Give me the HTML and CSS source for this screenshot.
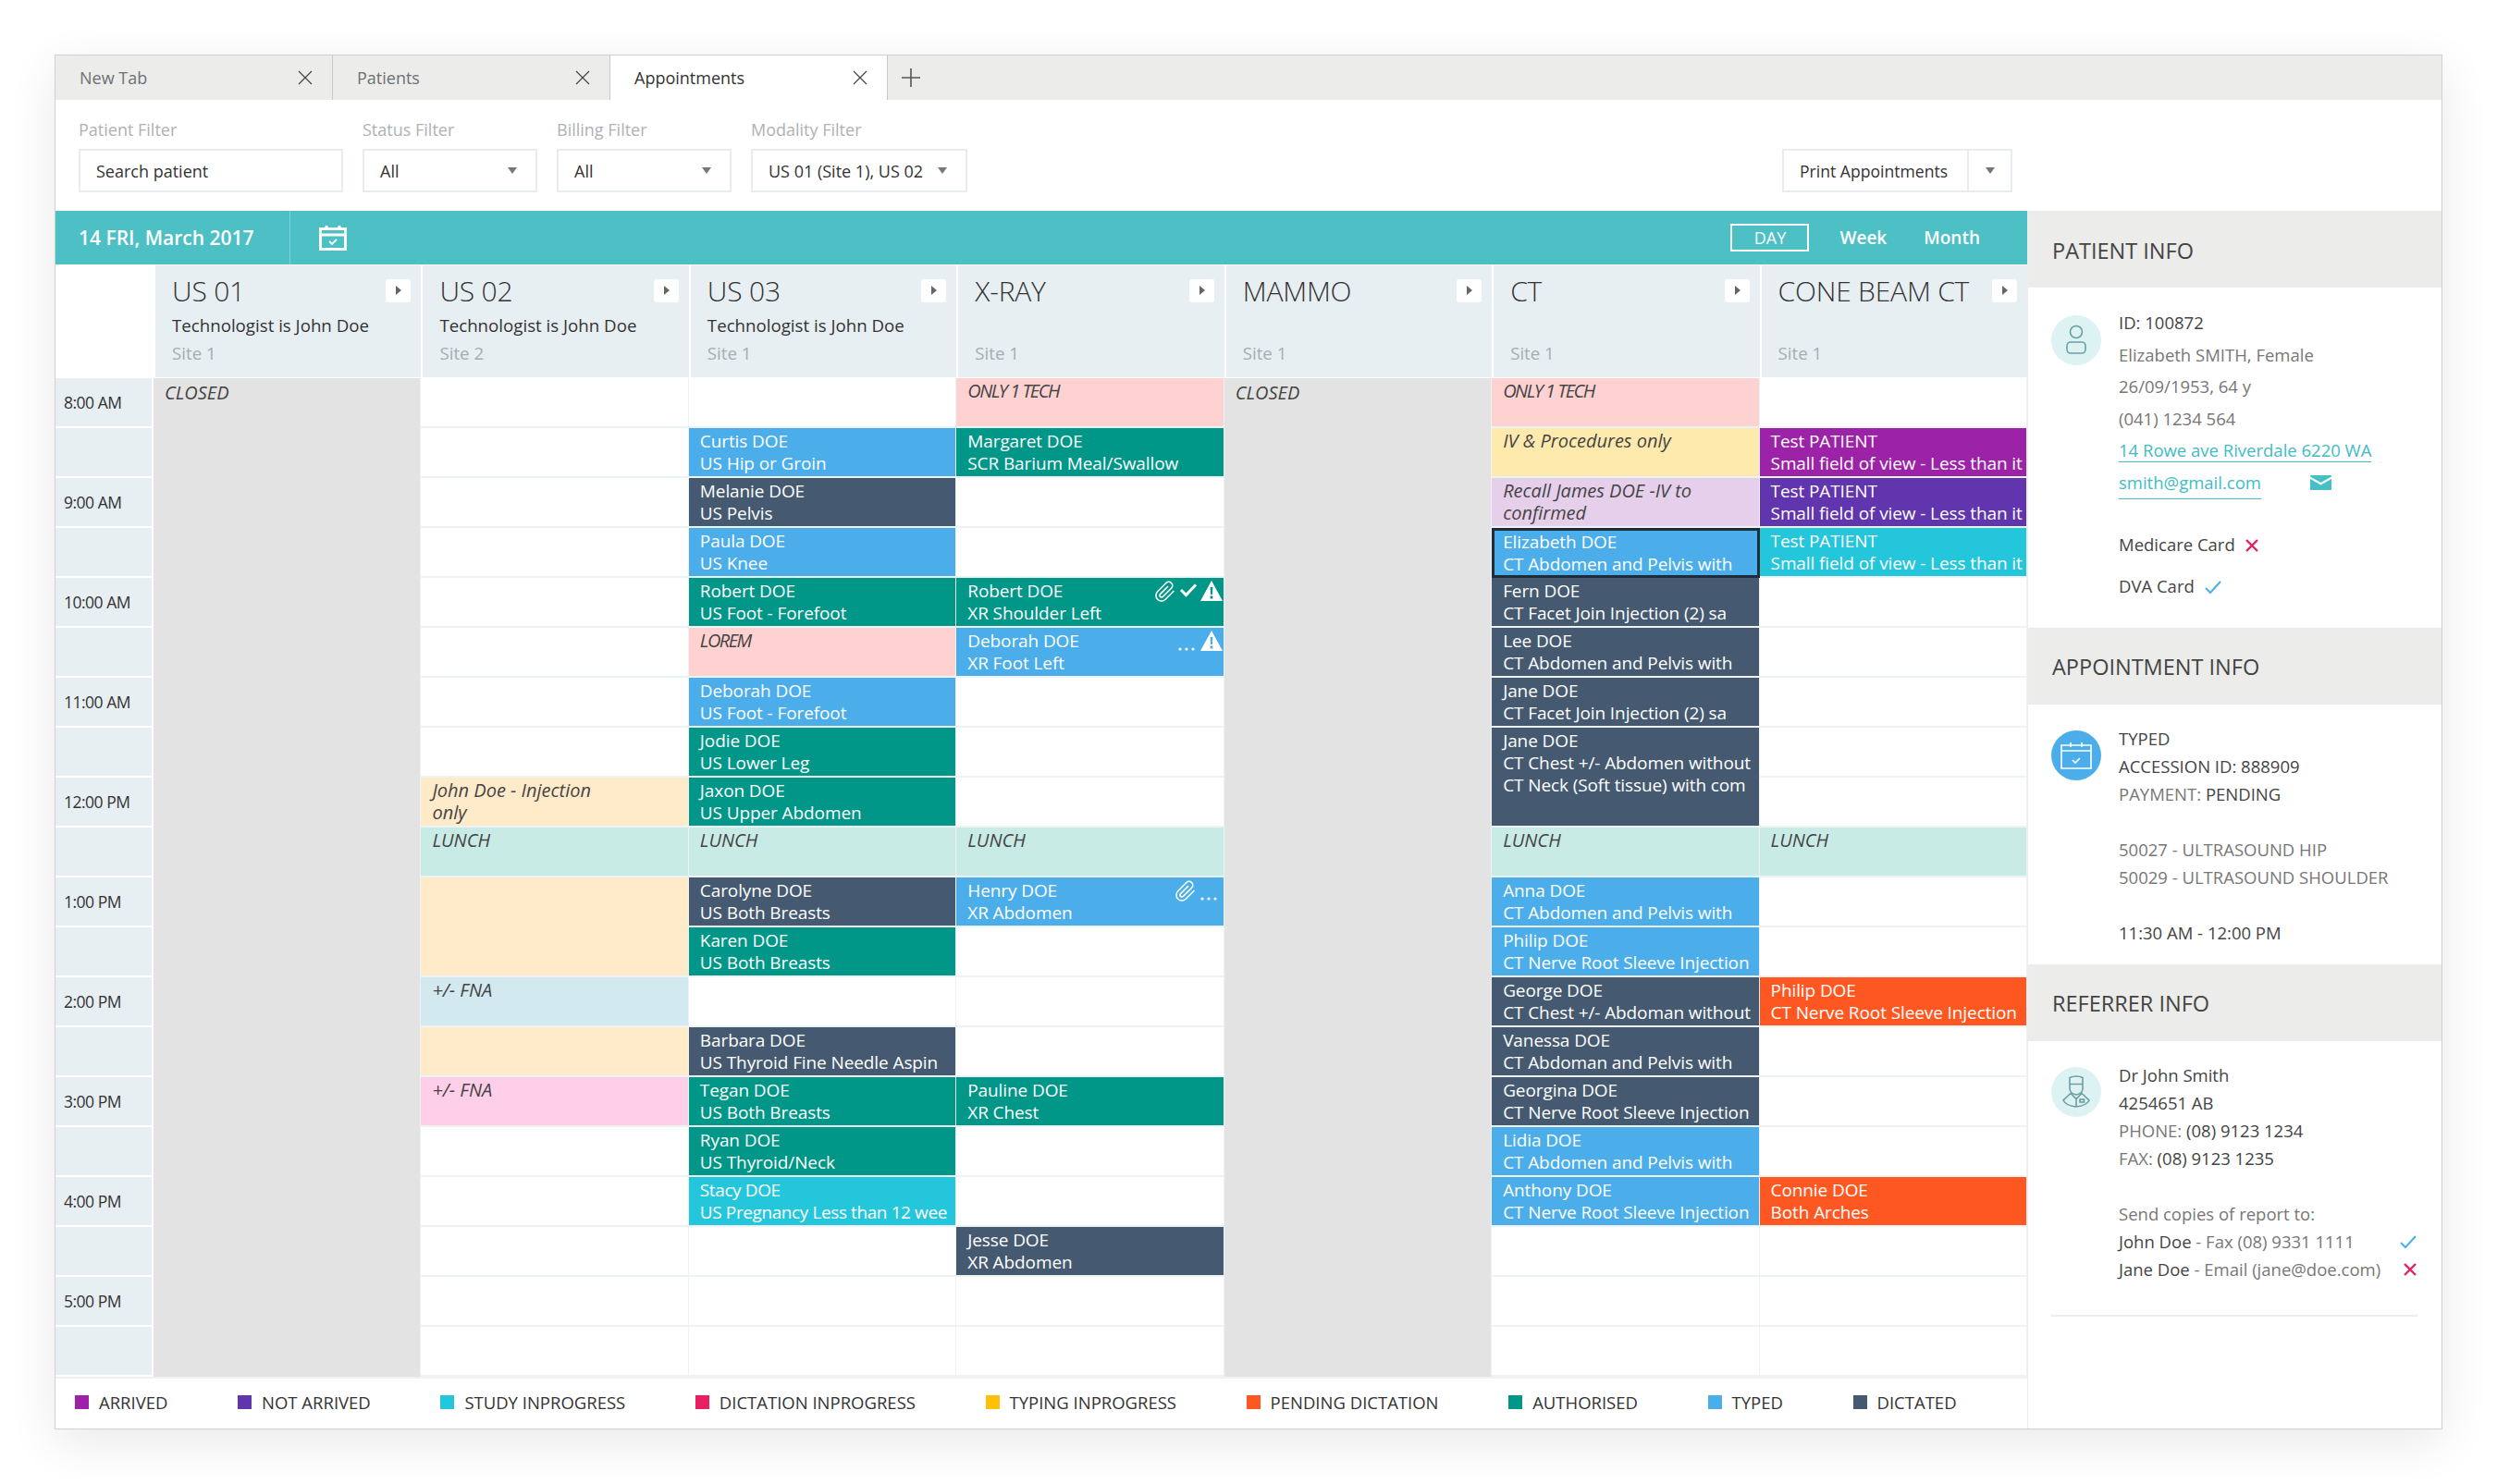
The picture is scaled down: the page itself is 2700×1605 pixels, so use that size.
FILE: index.html
```html
<!DOCTYPE html>
<html lang="en">
<head>
    <meta charset="UTF-8">
    <title>Appointments</title>
    <link rel="stylesheet" href="styles.css">
</head>
<body>
<div class="window">

    <!-- Tabs -->
    <div class="tabs">
        <div class="tab">New Tab <svg class="tab-x" viewBox="0 0 16 16"><path d="M1 1l14 14M15 1L1 15"/></svg></div>
        <div class="tab">Patients <svg class="tab-x" viewBox="0 0 16 16"><path d="M1 1l14 14M15 1L1 15"/></svg></div>
        <div class="tab active">Appointments <svg class="tab-x" viewBox="0 0 16 16"><path d="M1 1l14 14M15 1L1 15"/></svg></div>
        <svg class="tab-plus" viewBox="0 0 20 20"><path d="M10 0v20M0 10h20"/></svg>
    </div>

    <!-- Filters -->
    <div class="filters">
        <div class="filter w-patient">
            <label>Patient Filter</label>
            <div class="field">Search patient</div>
        </div>
        <div class="filter w-status">
            <label>Status Filter</label>
            <div class="field">All <span class="caret"></span></div>
        </div>
        <div class="filter w-status">
            <label>Billing Filter</label>
            <div class="field">All <span class="caret"></span></div>
        </div>
        <div class="filter w-modality">
            <label>Modality Filter</label>
            <div class="field">US 01 (Site 1), US 02 <span class="caret"></span></div>
        </div>
        <div class="print">
            <span class="print-text">Print Appointments</span>
            <span class="print-arrow"><span class="caret"></span></span>
        </div>
    </div>

    <div class="content">
        <div class="calendar">

            <div class="datebar">
                <div class="date">14 FRI, March 2017</div>
                <svg class="date-icon" viewBox="0 0 30 28">
                    <path class="cal-line" d="M1.5 4.5h27v22h-27zM1.5 11h27"/>
                    <path class="cal-line" d="M8 1v5M22 1v5"/>
                    <path class="cal-line thin" d="M11 18l3 3 5-5"/>
                </svg>
                <div class="views">
                    <span class="view current">DAY</span>
                    <span class="view">Week</span>
                    <span class="view">Month</span>
                </div>
            </div>

            <div class="heads">
                <div class="head-blank"></div>
                <div class="head"><h3>US 01</h3><p>Technologist is John Doe</p><small>Site 1</small><span class="head-btn"></span></div>
                <div class="head"><h3>US 02</h3><p>Technologist is John Doe</p><small>Site 2</small><span class="head-btn"></span></div>
                <div class="head"><h3>US 03</h3><p>Technologist is John Doe</p><small>Site 1</small><span class="head-btn"></span></div>
                <div class="head"><h3>X-RAY</h3><p>&nbsp;</p><small>Site 1</small><span class="head-btn"></span></div>
                <div class="head"><h3>MAMMO</h3><p>&nbsp;</p><small>Site 1</small><span class="head-btn"></span></div>
                <div class="head"><h3>CT</h3><p>&nbsp;</p><small>Site 1</small><span class="head-btn"></span></div>
                <div class="head"><h3>CONE BEAM CT</h3><p>&nbsp;</p><small>Site 1</small><span class="head-btn"></span></div>
            </div>

            <div class="grid">
                <!-- Times -->
                <div class="col times">
                    <div class="time">8:00 AM</div><div class="time"></div>
                    <div class="time">9:00 AM</div><div class="time"></div>
                    <div class="time">10:00 AM</div><div class="time"></div>
                    <div class="time">11:00 AM</div><div class="time"></div>
                    <div class="time">12:00 PM</div><div class="time"></div>
                    <div class="time">1:00 PM</div><div class="time"></div>
                    <div class="time">2:00 PM</div><div class="time"></div>
                    <div class="time">3:00 PM</div><div class="time"></div>
                    <div class="time">4:00 PM</div><div class="time"></div>
                    <div class="time">5:00 PM</div><div class="time"></div>
                </div>

                <!-- US 01 -->
                <div class="col">
                    <div class="cell note closed span-20">CLOSED</div>
                </div>

                <!-- US 02 -->
                <div class="col">
                    <div class="cell"></div><div class="cell"></div><div class="cell"></div><div class="cell"></div>
                    <div class="cell"></div><div class="cell"></div><div class="cell"></div><div class="cell"></div>
                    <div class="cell note tan">John Doe - Injection<br>only</div>
                    <div class="cell note mint">LUNCH</div>
                    <div class="cell note tan span-2"></div>
                    <div class="cell note sky">+/- FNA</div>
                    <div class="cell note tan"></div>
                    <div class="cell note rose">+/- FNA</div>
                    <div class="cell"></div><div class="cell"></div><div class="cell"></div><div class="cell"></div><div class="cell"></div>
                </div>

                <!-- US 03 -->
                <div class="col">
                    <div class="cell"></div>
                    <div class="cell blue">Curtis DOE<br>US Hip or Groin</div>
                    <div class="cell dark">Melanie DOE<br>US Pelvis</div>
                    <div class="cell blue">Paula DOE<br>US Knee</div>
                    <div class="cell green">Robert DOE<br>US Foot - Forefoot</div>
                    <div class="cell note pink tight">LOREM</div>
                    <div class="cell blue">Deborah DOE<br>US Foot - Forefoot</div>
                    <div class="cell green">Jodie DOE<br>US Lower Leg</div>
                    <div class="cell green">Jaxon DOE<br>US Upper Abdomen</div>
                    <div class="cell note mint">LUNCH</div>
                    <div class="cell dark">Carolyne DOE<br>US Both Breasts</div>
                    <div class="cell green">Karen DOE<br>US Both Breasts</div>
                    <div class="cell"></div>
                    <div class="cell dark">Barbara DOE<br>US Thyroid Fine Needle Aspin</div>
                    <div class="cell green">Tegan DOE<br>US Both Breasts</div>
                    <div class="cell green">Ryan DOE<br>US Thyroid/Neck</div>
                    <div class="cell cyan squeeze">Stacy DOE<br>US Pregnancy Less than 12 wee</div>
                    <div class="cell"></div><div class="cell"></div><div class="cell"></div>
                </div>

                <!-- X-RAY -->
                <div class="col">
                    <div class="cell note pink tight">ONLY 1 TECH</div>
                    <div class="cell green">Margaret DOE<br>SCR Barium Meal/Swallow</div>
                    <div class="cell"></div><div class="cell"></div>
                    <div class="cell green">Robert DOE<br>XR Shoulder Left
                        <span class="flags">
                            <svg class="flag" width="24" height="24" viewBox="0 0 24 24"><path class="flag-line" d="M21.400 11.050l-9.200 9.200a6 6 0 0 1-8.500-8.500l9.200-9.200a4 4 0 0 1 5.660 5.660l-9.200 9.200a2 2 0 0 1-2.830-2.830l8.490-8.480"/></svg>
                            <svg class="flag" width="20" height="20" viewBox="0 0 20 20"><path class="flag-line bold" d="M2 10l5.500 5.500L18 4.500"/></svg>
                            <svg class="flag" width="24" height="22" viewBox="0 0 24 22"><path class="flag-fill" fill-rule="evenodd" d="M12 0l12 22H0zM10.600 7l.5 8h1.800l.5-8zM10.600 16.500v3h2.800v-3z"/></svg>
                        </span>
                    </div>
                    <div class="cell blue">Deborah DOE<br>XR Foot Left
                        <span class="flags wide">
                            <svg class="dots" width="18" height="4" viewBox="0 0 18 4"><circle cx="2" cy="2" r="1.600"/><circle cx="9" cy="2" r="1.600"/><circle cx="16" cy="2" r="1.600"/></svg>
                            <svg class="flag" width="24" height="22" viewBox="0 0 24 22"><path class="flag-fill" fill-rule="evenodd" d="M12 0l12 22H0zM10.600 7l.5 8h1.800l.5-8zM10.600 16.500v3h2.800v-3z"/></svg>
                        </span>
                    </div>
                    <div class="cell"></div><div class="cell"></div><div class="cell"></div>
                    <div class="cell note mint">LUNCH</div>
                    <div class="cell blue">Henry DOE<br>XR Abdomen
                        <span class="flags inset">
                            <svg class="flag" width="24" height="24" viewBox="0 0 24 24"><path class="flag-line" d="M21.400 11.050l-9.200 9.200a6 6 0 0 1-8.500-8.500l9.200-9.200a4 4 0 0 1 5.660 5.660l-9.200 9.200a2 2 0 0 1-2.830-2.830l8.490-8.480"/></svg>
                            <svg class="dots" width="18" height="4" viewBox="0 0 18 4"><circle cx="2" cy="2" r="1.600"/><circle cx="9" cy="2" r="1.600"/><circle cx="16" cy="2" r="1.600"/></svg>
                        </span>
                    </div>
                    <div class="cell"></div><div class="cell"></div><div class="cell"></div>
                    <div class="cell green">Pauline DOE<br>XR Chest</div>
                    <div class="cell"></div><div class="cell"></div>
                    <div class="cell dark">Jesse DOE<br>XR Abdomen</div>
                    <div class="cell"></div><div class="cell"></div>
                </div>

                <!-- MAMMO -->
                <div class="col">
                    <div class="cell note closed span-20">CLOSED</div>
                </div>

                <!-- CT -->
                <div class="col">
                    <div class="cell note pink tight">ONLY 1 TECH</div>
                    <div class="cell note yellow">IV &amp; Procedures only</div>
                    <div class="cell note lilac">Recall James DOE -IV to<br>confirmed</div>
                    <div class="cell blue selected">Elizabeth DOE<br>CT Abdomen and Pelvis with</div>
                    <div class="cell dark">Fern DOE<br>CT Facet Join Injection (2) sa</div>
                    <div class="cell dark">Lee DOE<br>CT Abdomen and Pelvis with</div>
                    <div class="cell dark">Jane DOE<br>CT Facet Join Injection (2) sa</div>
                    <div class="cell dark span-2">Jane DOE<br>CT Chest +/- Abdomen without<br>CT Neck (Soft tissue) with com</div>
                    <div class="cell note mint">LUNCH</div>
                    <div class="cell blue">Anna DOE<br>CT Abdomen and Pelvis with</div>
                    <div class="cell blue">Philip DOE<br>CT Nerve Root Sleeve Injection</div>
                    <div class="cell dark">George DOE<br>CT Chest +/- Abdoman without</div>
                    <div class="cell dark">Vanessa DOE<br>CT Abdoman and Pelvis with</div>
                    <div class="cell dark">Georgina DOE<br>CT Nerve Root Sleeve Injection</div>
                    <div class="cell blue">Lidia DOE<br>CT Abdomen and Pelvis with</div>
                    <div class="cell blue">Anthony DOE<br>CT Nerve Root Sleeve Injection</div>
                    <div class="cell"></div><div class="cell"></div><div class="cell"></div>
                </div>

                <!-- CONE BEAM CT -->
                <div class="col">
                    <div class="cell"></div>
                    <div class="cell purple">Test PATIENT<br>Small field of view - Less than it</div>
                    <div class="cell violet">Test PATIENT<br>Small field of view - Less than it</div>
                    <div class="cell cyan">Test PATIENT<br>Small field of view - Less than it</div>
                    <div class="cell"></div><div class="cell"></div><div class="cell"></div><div class="cell"></div><div class="cell"></div>
                    <div class="cell note mint">LUNCH</div>
                    <div class="cell"></div><div class="cell"></div>
                    <div class="cell orange">Philip DOE<br>CT Nerve Root Sleeve Injection</div>
                    <div class="cell"></div><div class="cell"></div><div class="cell"></div>
                    <div class="cell orange">Connie DOE<br>Both Arches</div>
                    <div class="cell"></div><div class="cell"></div><div class="cell"></div>
                </div>
            </div>

            <!-- Legend -->
            <div class="legend">
                <span class="key"><i class="purple"></i>ARRIVED</span>
                <span class="key"><i class="violet"></i>NOT ARRIVED</span>
                <span class="key"><i class="cyan"></i>STUDY INPROGRESS</span>
                <span class="key"><i class="crimson"></i>DICTATION INPROGRESS</span>
                <span class="key"><i class="amber"></i>TYPING INPROGRESS</span>
                <span class="key"><i class="orange"></i>PENDING DICTATION</span>
                <span class="key"><i class="green"></i>AUTHORISED</span>
                <span class="key"><i class="blue"></i>TYPED</span>
                <span class="key"><i class="dark"></i>DICTATED</span>
            </div>
        </div>

        <!-- Side panel -->
        <aside class="side">
            <h2 class="side-head">PATIENT INFO</h2>
            <section class="side-body patient">
                <div class="avatar pale">
                    <svg width="28" height="34" viewBox="0 0 28 34"><circle class="ico" cx="14" cy="8" r="6.500"/><rect class="ico" x="4" y="19" width="20" height="12" rx="4"/></svg>
                </div>
                <div class="info roomy">
                    <p class="ink">ID: 100872</p>
                    <p>Elizabeth SMITH, Female</p>
                    <p>26/09/1953, 64 y</p>
                    <p>(041) 1234 564</p>
                    <p><a>14 Rowe ave Riverdale 6220 WA</a></p>
                    <p class="mail-row"><a>smith@gmail.com</a>
                        <svg class="mail" width="23" height="16" viewBox="0 0 23 16"><path d="M1 0h21a1 1 0 0 1 1 1v.6L11.500 8 0 1.600V1a1 1 0 0 1 1-1z"/><path d="M0 4l11.500 6.400L23 4v11a1 1 0 0 1-1 1H1a1 1 0 0 1-1-1z"/></svg>
                    </p>
                    <p class="ink card first">Medicare Card <svg class="mark" width="16" height="16" viewBox="0 0 16 16"><path class="cross" d="M2 2l12 12M14 2L2 14"/></svg></p>
                    <p class="ink card">DVA Card <svg class="mark" width="20" height="16" viewBox="0 0 20 16"><path class="tick" d="M2 9l5 5L18 2"/></svg></p>
                </div>
            </section>

            <h2 class="side-head">APPOINTMENT INFO</h2>
            <section class="side-body appt">
                <div class="avatar strong">
                    <svg width="34" height="30" viewBox="0 0 34 30"><path class="ico-w" d="M1 4h32v25H1zM1 10h32"/><path class="ico-w" d="M11 1v5M23 1v5"/><path class="ico-w" d="M13 20l3 3 5-5"/></svg>
                </div>
                <div class="info">
                    <p class="ink">TYPED</p>
                    <p class="ink">ACCESSION ID: 888909</p>
                    <p>PAYMENT: <span class="ink">PENDING</span></p>
                    <p class="gap">50027 - ULTRASOUND HIP</p>
                    <p>50029 - ULTRASOUND SHOULDER</p>
                    <p class="ink gap">11:30 AM - 12:00 PM</p>
                </div>
            </section>

            <h2 class="side-head">REFERRER INFO</h2>
            <section class="side-body refer">
                <div class="avatar pale">
                    <svg width="32" height="38" viewBox="0 0 32 38">
                        <path class="ico" d="M9 3.500q7-3 14 0v12q-.5 5.500-7 6.500q-6.500-1-7-6.500zM9 10.500h14"/>
                        <path class="ico" d="M10 20.500L2 28q3 6 14 7 11-1 14-7l-8-7.500-6 6zM16 27v8"/>
                        <rect class="ico" x="20" y="27" width="4.500" height="3"/>
                    </svg>
                </div>
                <div class="info">
                    <p class="ink">Dr John Smith</p>
                    <p class="ink">4254651 AB</p>
                    <p>PHONE: <span class="ink">(08) 9123 1234</span></p>
                    <p>FAX: <span class="ink">(08) 9123 1235</span></p>
                    <p class="gap">Send copies of report to:</p>
                    <p class="copy"><span><span class="ink">John Doe</span> - Fax (08) 9331 1111</span><svg class="mark" width="20" height="16" viewBox="0 0 20 16"><path class="tick" d="M2 9l5 5L18 2"/></svg></p>
                    <p class="copy"><span><span class="ink">Jane Doe</span> - Email (jane@doe.com)</span><svg class="mark" width="16" height="16" viewBox="0 0 16 16"><path class="cross" d="M2 2l12 12M14 2L2 14"/></svg></p>
                </div>
            </section>
            <hr class="side-rule">
        </aside>
    </div>
</div>
</body>
</html>
```

FILE: styles.css
```css
* {
    box-sizing: border-box;
}

body {
    margin: 0;
    background-color: #fff;
    color: #333;
    font-family: "Open Sans", "Noto Sans", sans-serif;
    font-size: 18px;
    height: 1605px;
    overflow: hidden;
}

p, h2, h3 {
    margin: 0;
    font-weight: normal;
}

.window {
    width: 2582px;
    height: 1487px;
    margin: 59px 0 0 59px;
    border: 1px solid #cfd1d1;
    background-color: #fff;
    box-shadow: 0 14px 50px rgba(0, 0, 0, 0.09);
}

/* Tabs */
.tabs {
    display: flex;
    align-items: center;
    height: 48px;
    background-color: #ececeb;
}

.tab {
    display: flex;
    align-items: center;
    justify-content: space-between;
    width: 300px;
    height: 48px;
    padding: 0 21px 0 26px;
    border-right: 1px solid #c8c9c9;
    color: #6d7173;
    font-size: 18px;
}

.tab.active {
    background-color: #fff;
    color: #333;
}

.tab-x {
    width: 16px;
    height: 16px;
    fill: none;
    stroke: #444;
    stroke-width: 1.2;
}

.tab-plus {
    width: 20px;
    height: 20px;
    margin-left: 15px;
    fill: none;
    stroke: #555;
    stroke-width: 1.6;
}

/* Filters */
.filters {
    display: flex;
    align-items: flex-start;
    gap: 21px;
    height: 120px;
    padding: 20px 0 0 25px;
}

.filter label {
    display: block;
    height: 33px;
    color: #aeb2b4;
    font-size: 18px;
}

.w-patient { width: 286px; }
.w-status { width: 189px; }
.w-modality { width: 234px; }

.field {
    display: flex;
    align-items: center;
    justify-content: space-between;
    height: 47px;
    padding: 0 20px 0 17px;
    border: 2px solid #e6ecef;
    color: #333;
    font-size: 18px;
    white-space: nowrap;
}

.caret {
    display: inline-block;
    width: 0;
    height: 0;
    border-left: 5px solid transparent;
    border-right: 5px solid transparent;
    border-top: 7px solid #777;
}

.print {
    display: flex;
    align-items: center;
    width: 249px;
    height: 47px;
    margin: 33px 464px 0 auto;
    border: 2px solid #e6ecef;
    font-size: 17.600px;
    white-space: nowrap;
}

.print-text {
    flex: 1;
    padding-left: 17px;
}

.print-arrow {
    display: flex;
    align-items: center;
    justify-content: center;
    width: 47px;
    height: 100%;
    border-left: 2px solid #e6ecef;
}

/* Calendar */
.content {
    display: flex;
    height: 1317px;
}

.calendar {
    width: 2132px;
}

.datebar {
    display: flex;
    align-items: center;
    height: 58px;
    margin-bottom: 1px;
    background-color: #4dc0c6;
    color: #fff;
}

.date {
    width: 254px;
    height: 100%;
    padding-left: 25px;
    border-right: 1px solid #7ed2d6;
    font-size: 21px;
    line-height: 58px;
    font-weight: 600;
}

.date-icon {
    width: 30px;
    height: 28px;
    margin-left: 31px;
    fill: none;
}

.cal-line {
    stroke: #fff;
    stroke-width: 3;
    fill: none;
}

.cal-line.thin {
    stroke-width: 1.8;
}

.views {
    display: flex;
    align-items: center;
    margin-left: auto;
    padding-right: 51px;
    font-size: 19px;
    font-weight: 600;
}

.view {
    margin-left: 40px;
}

.view.current {
    width: 85px;
    height: 30px;
    margin-right: -7px;
    border: 2px solid #fff;
    font-size: 18px;
    font-weight: normal;
    line-height: 26px;
    text-align: center;
}

.heads, .grid {
    display: grid;
    grid-template-columns: 106px repeat(7, 1fr);
}

.heads {
    height: 122px;
    padding-bottom: 1px;
}

.head {
    position: relative;
    padding: 7px 0 0 18px;
    border-left: 2px solid #fff;
    background-color: #e8eff2;
    white-space: nowrap;
}

.head h3 {
    height: 45px;
    color: #333;
    font-size: 30px;
    font-weight: 300;
    letter-spacing: -0.2px;
}

.head p {
    height: 30px;
    font-size: 18.700px;
    line-height: 26px;
}

.head small {
    display: block;
    color: #a6adb0;
    font-size: 18.700px;
}

.head-btn {
    position: absolute;
    top: 15px;
    right: 11px;
    width: 27px;
    height: 25px;
    border-radius: 3px;
    background-color: #fff;
}

.head-btn::after {
    content: "";
    position: absolute;
    top: 7px;
    left: 11px;
    border-top: 5px solid transparent;
    border-bottom: 5px solid transparent;
    border-left: 6px solid #666;
}

.col {
    display: grid;
    grid-template-rows: repeat(20, 54px);
    min-width: 0;
}

.time {
    padding: 0 0 0 9px;
    border-right: 2px solid #fff;
    border-bottom: 2px solid #fff;
    background-color: #e8eff2;
    font-size: 17.500px;
    letter-spacing: -0.5px;
    line-height: 52px;
}

.cell {
    position: relative;
    padding: 2px 8px 0 12px;
    overflow: hidden;
    border-right: 1px solid #edf3f5;
    border-bottom: 2px solid #edf3f5;
    color: #fff;
    font-size: 19px;
    letter-spacing: -0.1px;
    line-height: 24px;
    white-space: nowrap;
}

.span-2 { grid-row: span 2; }
.span-20 { grid-row: span 20; }

.note {
    color: #444;
    font-size: 20px;
    font-style: italic;
    letter-spacing: 0;
}

.tight {
    letter-spacing: -1.5px;
}

.squeeze {
    letter-spacing: -0.4px;
}

.closed {
    padding-top: 4px;
    background-color: #e2e3e2;
    border-color: #e2e3e2;
    border-right-color: #edf3f5;
}

.green { background-color: #009688; }
.blue { background-color: #4baeea; }
.dark { background-color: #455a70; }
.cyan { background-color: #23c6da; }
.purple { background-color: #9c23a8; }
.violet { background-color: #6035ae; }
.orange { background-color: #ff5722; }
.crimson { background-color: #e91e63; }
.amber { background-color: #ffc107; }
.pink { background-color: #ffd2d2; }
.yellow { background-color: #ffeaae; }
.lilac { background-color: #e6cfeb; }
.tan { background-color: #ffeaca; }
.mint { background-color: #c9ebe6; }
.sky { background-color: #d3e9f0; }
.rose { background-color: #ffcfea; }

.selected {
    padding: 0 5px 0 9px;
    border: 3px solid #1f2d3a;
}

.flags {
    position: absolute;
    top: 3px;
    right: 1px;
    display: flex;
    align-items: flex-start;
    gap: 3px;
}

.flags.wide {
    gap: 6px;
}

.flags.inset {
    right: 7px;
    gap: 4px;
}

.flag-line {
    fill: none;
    stroke: #fff;
    stroke-width: 1.6;
}

.flag-line.bold {
    stroke-width: 3;
}

.flag-fill {
    fill: #fff;
}

.dots {
    margin-top: 18px;
    fill: #fff;
}

/* Legend */
.legend {
    display: flex;
    align-items: center;
    gap: 75.600px;
    height: 56px;
    padding: 0 0 3px 21px;
    border-top: 2px solid #edf3f5;
    font-size: 18.500px;
}

.key {
    display: flex;
    align-items: center;
    white-space: nowrap;
}

.key i {
    width: 15px;
    height: 15px;
    margin-right: 11px;
}

/* Side panel */
.side {
    width: 448px;
    border-left: 1px solid #e8eff2;
}

.side-head {
    height: 83px;
    padding-left: 26px;
    background-color: #ececeb;
    color: #444;
    font-size: 23.500px;
    line-height: 84px;
}

.side-head:first-child {
    line-height: 86px;
}

.side-body {
    display: flex;
    padding: 0 26px 0 25px;
}

.patient { height: 368px; padding-top: 30px; }
.appt { height: 281px; padding-top: 28px; }
.refer { height: 296px; padding-top: 28px; }

.avatar {
    display: flex;
    align-items: center;
    justify-content: center;
    flex: none;
    width: 54px;
    height: 54px;
    margin-right: 19px;
    border-radius: 50%;
}

.pale { background-color: #dcf2f3; }
.strong { background-color: #4baeea; }

.ico {
    fill: none;
    stroke: #6c9ea2;
    stroke-width: 1.6;
}

.ico-w {
    fill: none;
    stroke: #fff;
    stroke-width: 1.6;
}

.info {
    flex: 1;
    margin-top: -6px;
    color: #777;
    font-size: 18.500px;
    line-height: 30px;
    white-space: nowrap;
}

.info.roomy {
    margin-top: -9px;
    line-height: 34.500px;
}

.ink {
    color: #444;
}

.gap {
    margin-top: 30px;
}

.info a {
    color: #3fbcc4;
    border-bottom: 1px solid #3fbcc4;
}

.mail-row {
    display: flex;
    align-items: center;
}

.mail {
    margin-left: 53px;
    fill: #46bfc6;
}

.card {
    line-height: 45px;
}

.card.first {
    margin-top: 26px;
}

.mark {
    margin-left: 5px;
    vertical-align: -2px;
}

.cross {
    fill: none;
    stroke: #e91e63;
    stroke-width: 2.400;
}

.tick {
    fill: none;
    stroke: #4baeea;
    stroke-width: 2;
}

.copy {
    display: flex;
    align-items: center;
    justify-content: space-between;
}

.side-rule {
    height: 2px;
    margin: 0 26px 0 25px;
    border: 0;
    background-color: #eceeee;
}
```
